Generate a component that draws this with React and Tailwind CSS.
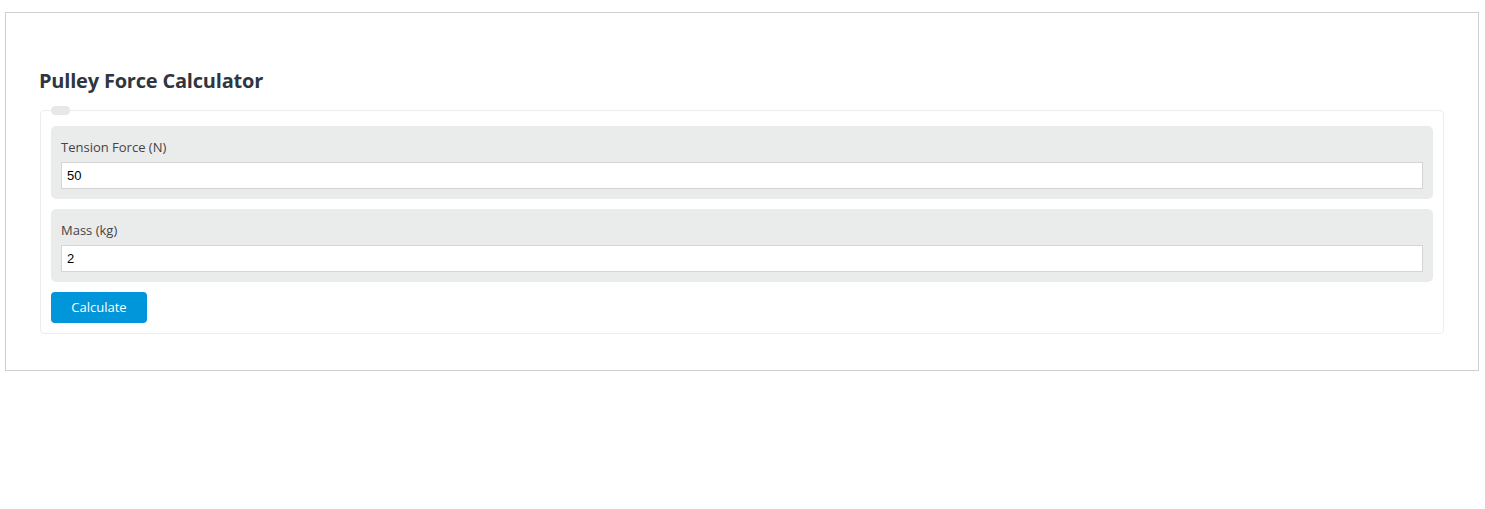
import React, { useState } from 'react'

const Field = ({ label, value, onChange }) => {
    return (
        <div className="bg-[#eaebeb] rounded-[5px] px-[10px] pt-[11px] pb-[10px]">
            <label className="block text-[13px] leading-[20px] text-[#444]">{label}</label>
            <input
                type="text"
                className="block w-full mt-[5px] h-[27px] bg-white border border-[#d4d4d4] px-[5px] text-[13px] text-black outline-none"
                style={{ fontFamily: 'Arial, "Liberation Sans", sans-serif' }}
                value={value}
                onChange={(e) => onChange(e.target.value)}
            />
        </div>
    )
}

const App = () => {
    const [tension, setTension] = useState('50')
    const [mass, setMass] = useState('2')

    return (
        <div className="min-h-[509px] bg-white pt-[12px] px-[5px]" style={{ fontFamily: '"Open Sans", "Noto Sans", sans-serif' }}>
            <div className="border border-[#cfcfcf] w-[1474px] h-[359px] pt-[54px] px-[34px]">
                <h2 className="-ml-[1px] text-[20px] leading-[28px] font-bold text-[#2f3640] tracking-[-0.2px]">Pulley Force Calculator</h2>
                <fieldset className="mt-[11px] border border-[#ececec] rounded-[4px] px-[10px] pb-[10px] pt-[11px] w-[1404px]">
                    <legend className="w-[19px] h-[9px] bg-[#e6e7e7] rounded-full"></legend>
                    <div className="flex flex-col gap-[10px]">
                        <Field label="Tension Force (N)" value={tension} onChange={setTension} />
                        <Field label="Mass (kg)" value={mass} onChange={setMass} />
                        <div>
                            <button className="bg-[#0195d9] text-white text-[13px] rounded-[4px] w-[96px] h-[31px]">Calculate</button>
                        </div>
                    </div>
                </fieldset>
            </div>
        </div>
    )
}

export default App
